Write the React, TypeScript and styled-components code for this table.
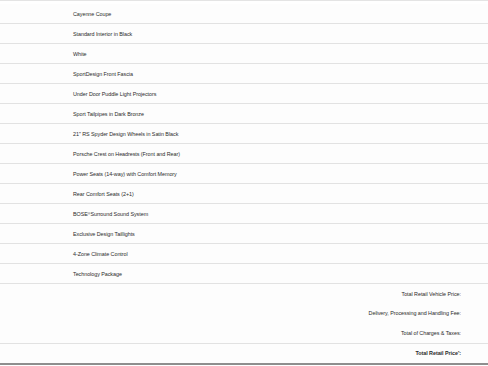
import styled, { createGlobalStyle } from 'styled-components'

const GlobalStyle = createGlobalStyle`
    html, body {
        margin: 0;
        padding: 0;
        background: #ffffff;
    }
    body {
        font-family: "Liberation Sans", Arial, sans-serif;
        color: #2b2b2b;
    }
`

const Sheet = styled.div`
    width: 488px;
    height: 366px;
    overflow: hidden;
    border-top: 1px solid #e4e4e4;
    box-sizing: border-box;
`

const List = styled.ul`
    list-style: none;
    margin: 3px 0 0;
    padding: 0;
`

const Row = styled.li<{ $align?: 'left' | 'right'; $plain?: boolean }>`
    display: flex;
    align-items: center;
    justify-content: ${p => (p.$align === 'right' ? 'flex-end' : 'flex-start')};
    height: ${p => (p.$plain ? '19.6px' : '19px')};
    padding: ${p => (p.$align === 'right' ? '0 27px 0 0' : '0 0 0 73px')};
    border-bottom: ${p => (p.$plain ? 'none' : '1px solid #e2e2e2')};
    background: #fdfdfd;
    font-size: 5.4px;
    letter-spacing: -0.05px;
    white-space: nowrap;
`

const Summary = styled.div`
    border-top: 0;
    border-bottom: 1px solid #e2e2e2;
    padding: 0;
`

const TotalRow = styled(Row)`
    font-weight: 700;
    border-bottom: 2px solid #8e8e8e;
    height: 19px;
`

const Sup = styled.sup`
    font-size: 3.6px;
    line-height: 0;
    vertical-align: 2px;
`

const options: React.ReactNode[] = [
    'Cayenne Coupe',
    'Standard Interior in Black',
    'White',
    'SportDesign Front Fascia',
    'Under Door Puddle Light Projectors',
    'Sport Tailpipes in Dark Bronze',
    '21" RS Spyder Design Wheels in Satin Black',
    'Porsche Crest on Headrests (Front and Rear)',
    'Power Seats (14-way) with Comfort Memory',
    'Rear Comfort Seats (2+1)',
    <>BOSE<Sup>®</Sup> Surround Sound System</>,
    'Exclusive Design Taillights',
    '4-Zone Climate Control',
    'Technology Package',
]

const charges = [
    'Total Retail Vehicle Price:',
    'Delivery, Processing and Handling Fee:',
    'Total of Charges & Taxes:',
]

function App() {
    return (
        <>
            <GlobalStyle />
            <Sheet>
                <List>
                    {options.map((o, i) => (
                        <Row key={i}>{o}</Row>
                    ))}
                </List>
                <Summary>
                    {charges.map(c => (
                        <Row key={c} $align="right" $plain>{c}</Row>
                    ))}
                </Summary>
                <List as="div" style={{ margin: 0 }}>
                    <TotalRow as="div" $align="right">
                        Total Retail Price<Sup>*</Sup>:
                    </TotalRow>
                </List>
            </Sheet>
        </>
    )
}

export default App
